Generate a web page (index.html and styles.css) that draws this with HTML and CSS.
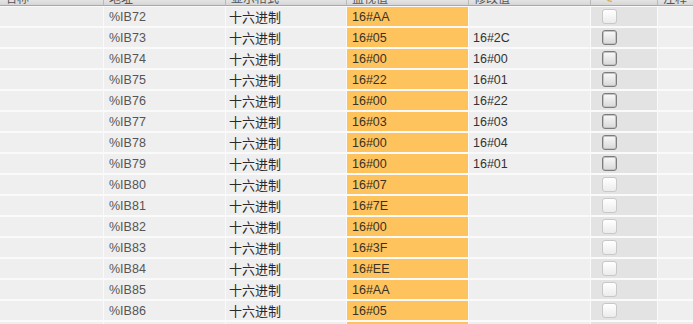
FILE: index.html
```html
<!DOCTYPE html>
<html lang="zh">
<head>
    <meta charset="UTF-8">
    <title>监控表</title>
    <link rel="stylesheet" href="styles.css">
</head>
<body>
    <div class="watch-table">
        <div class="head"><span>名称</span></div>
        <div class="head"><span>地址</span></div>
        <div class="head"><span>显示格式</span></div>
        <div class="head"><span>监视值</span></div>
        <div class="head"><span>修改值</span></div>
        <div class="head head-icon"><span>✎</span></div>
        <div class="head"><span>注释</span></div>

        <!-- %IB72 -->
        <div class="cell"></div><div class="cell addr">%IB72</div><div class="cell fmt">十六进制</div>
        <div class="cell mon">16#AA</div><div class="cell mod"></div>
        <div class="cell chk"><span class="box off"></span></div><div class="cell"></div>

        <div class="cell"></div><div class="cell addr">%IB73</div><div class="cell fmt">十六进制</div>
        <div class="cell mon">16#05</div><div class="cell mod">16#2C</div>
        <div class="cell chk"><span class="box"></span></div><div class="cell"></div>

        <div class="cell"></div><div class="cell addr">%IB74</div><div class="cell fmt">十六进制</div>
        <div class="cell mon">16#00</div><div class="cell mod">16#00</div>
        <div class="cell chk"><span class="box"></span></div><div class="cell"></div>

        <div class="cell"></div><div class="cell addr">%IB75</div><div class="cell fmt">十六进制</div>
        <div class="cell mon">16#22</div><div class="cell mod">16#01</div>
        <div class="cell chk"><span class="box"></span></div><div class="cell"></div>

        <div class="cell"></div><div class="cell addr">%IB76</div><div class="cell fmt">十六进制</div>
        <div class="cell mon">16#00</div><div class="cell mod">16#22</div>
        <div class="cell chk"><span class="box"></span></div><div class="cell"></div>

        <div class="cell"></div><div class="cell addr">%IB77</div><div class="cell fmt">十六进制</div>
        <div class="cell mon">16#03</div><div class="cell mod">16#03</div>
        <div class="cell chk"><span class="box"></span></div><div class="cell"></div>

        <div class="cell"></div><div class="cell addr">%IB78</div><div class="cell fmt">十六进制</div>
        <div class="cell mon">16#00</div><div class="cell mod">16#04</div>
        <div class="cell chk"><span class="box"></span></div><div class="cell"></div>

        <div class="cell"></div><div class="cell addr">%IB79</div><div class="cell fmt">十六进制</div>
        <div class="cell mon">16#00</div><div class="cell mod">16#01</div>
        <div class="cell chk"><span class="box"></span></div><div class="cell"></div>

        <div class="cell"></div><div class="cell addr">%IB80</div><div class="cell fmt">十六进制</div>
        <div class="cell mon">16#07</div><div class="cell mod"></div>
        <div class="cell chk"><span class="box off"></span></div><div class="cell"></div>

        <div class="cell"></div><div class="cell addr">%IB81</div><div class="cell fmt">十六进制</div>
        <div class="cell mon">16#7E</div><div class="cell mod"></div>
        <div class="cell chk"><span class="box off"></span></div><div class="cell"></div>

        <div class="cell"></div><div class="cell addr">%IB82</div><div class="cell fmt">十六进制</div>
        <div class="cell mon">16#00</div><div class="cell mod"></div>
        <div class="cell chk"><span class="box off"></span></div><div class="cell"></div>

        <div class="cell"></div><div class="cell addr">%IB83</div><div class="cell fmt">十六进制</div>
        <div class="cell mon">16#3F</div><div class="cell mod"></div>
        <div class="cell chk"><span class="box off"></span></div><div class="cell"></div>

        <div class="cell"></div><div class="cell addr">%IB84</div><div class="cell fmt">十六进制</div>
        <div class="cell mon">16#EE</div><div class="cell mod"></div>
        <div class="cell chk"><span class="box off"></span></div><div class="cell"></div>

        <div class="cell"></div><div class="cell addr">%IB85</div><div class="cell fmt">十六进制</div>
        <div class="cell mon">16#AA</div><div class="cell mod"></div>
        <div class="cell chk"><span class="box off"></span></div><div class="cell"></div>

        <div class="cell"></div><div class="cell addr">%IB86</div><div class="cell fmt">十六进制</div>
        <div class="cell mon">16#05</div><div class="cell mod"></div>
        <div class="cell chk"><span class="box off"></span></div><div class="cell"></div>

        <!-- 下一行只露出一点 -->
        <div class="cell"></div><div class="cell addr"></div><div class="cell fmt"></div>
        <div class="cell mon"></div><div class="cell mod"></div>
        <div class="cell chk"><span class="box off"></span></div><div class="cell"></div>
    </div>
</body>
</html>
```

FILE: styles.css
```css
body {
    margin: 0;
    height: 324px;
    overflow: hidden;
    background-color: #fafafa;
    font-family: "Liberation Sans", "Noto Sans CJK SC", sans-serif;
}

.watch-table {
    display: grid;
    grid-template-columns: 103px 121px 120px 121px 121px 66px 1fr;
    grid-auto-rows: 19px;
    grid-template-rows: 5px;
    column-gap: 1px;
    row-gap: 2px;
    background-color: #fafafa;
}

/* cabecera cortada arriba */
.head {
    height: 5px;
    overflow: hidden;
    background: linear-gradient(#e4e4e4, #d6d6d6);
    border-bottom: 1px solid #a8a8a8;
    border-right: 1px solid #b9b9b9;
    margin-right: -1px;
    font-family: "Noto Sans CJK SC", sans-serif;
    font-size: 12px;
    line-height: 12px;
    color: #555;
}

.head span {
    display: block;
    margin-top: -8px;
    padding-left: 5px;
}

.head-icon span {
    color: #c99a2e;
    padding-left: 12px;
}

.cell {
    background-color: #efefef;
    font-size: 12.5px;
    line-height: 20px;
    color: #333;
    white-space: nowrap;
}

.addr {
    padding-left: 5px;
    color: #555;
    font-size: 12.5px;
}

.fmt {
    padding-left: 3px;
    font-family: "Noto Sans CJK SC", sans-serif;
    font-size: 13px;
    color: #2a2a2a;
}

.mon {
    background-color: #fec35d;
    padding-left: 5px;
    color: #383124;
}

.mod {
    padding-left: 4px;
}

.chk {
    background-color: #e3e3e3;
    display: flex;
    align-items: center;
    padding-left: 11px;
}

.box {
    width: 13px;
    height: 13px;
    border: 1px solid #7c7c7c;
    border-radius: 3px;
    background: linear-gradient(#fafafa, #d8d8d8);
    box-shadow: inset 0 0 0 1px #c4c4c4;
}

.box.off {
    border-color: #c8c8c8;
    background: linear-gradient(#ffffff, #ececec);
    box-shadow: none;
}
```
